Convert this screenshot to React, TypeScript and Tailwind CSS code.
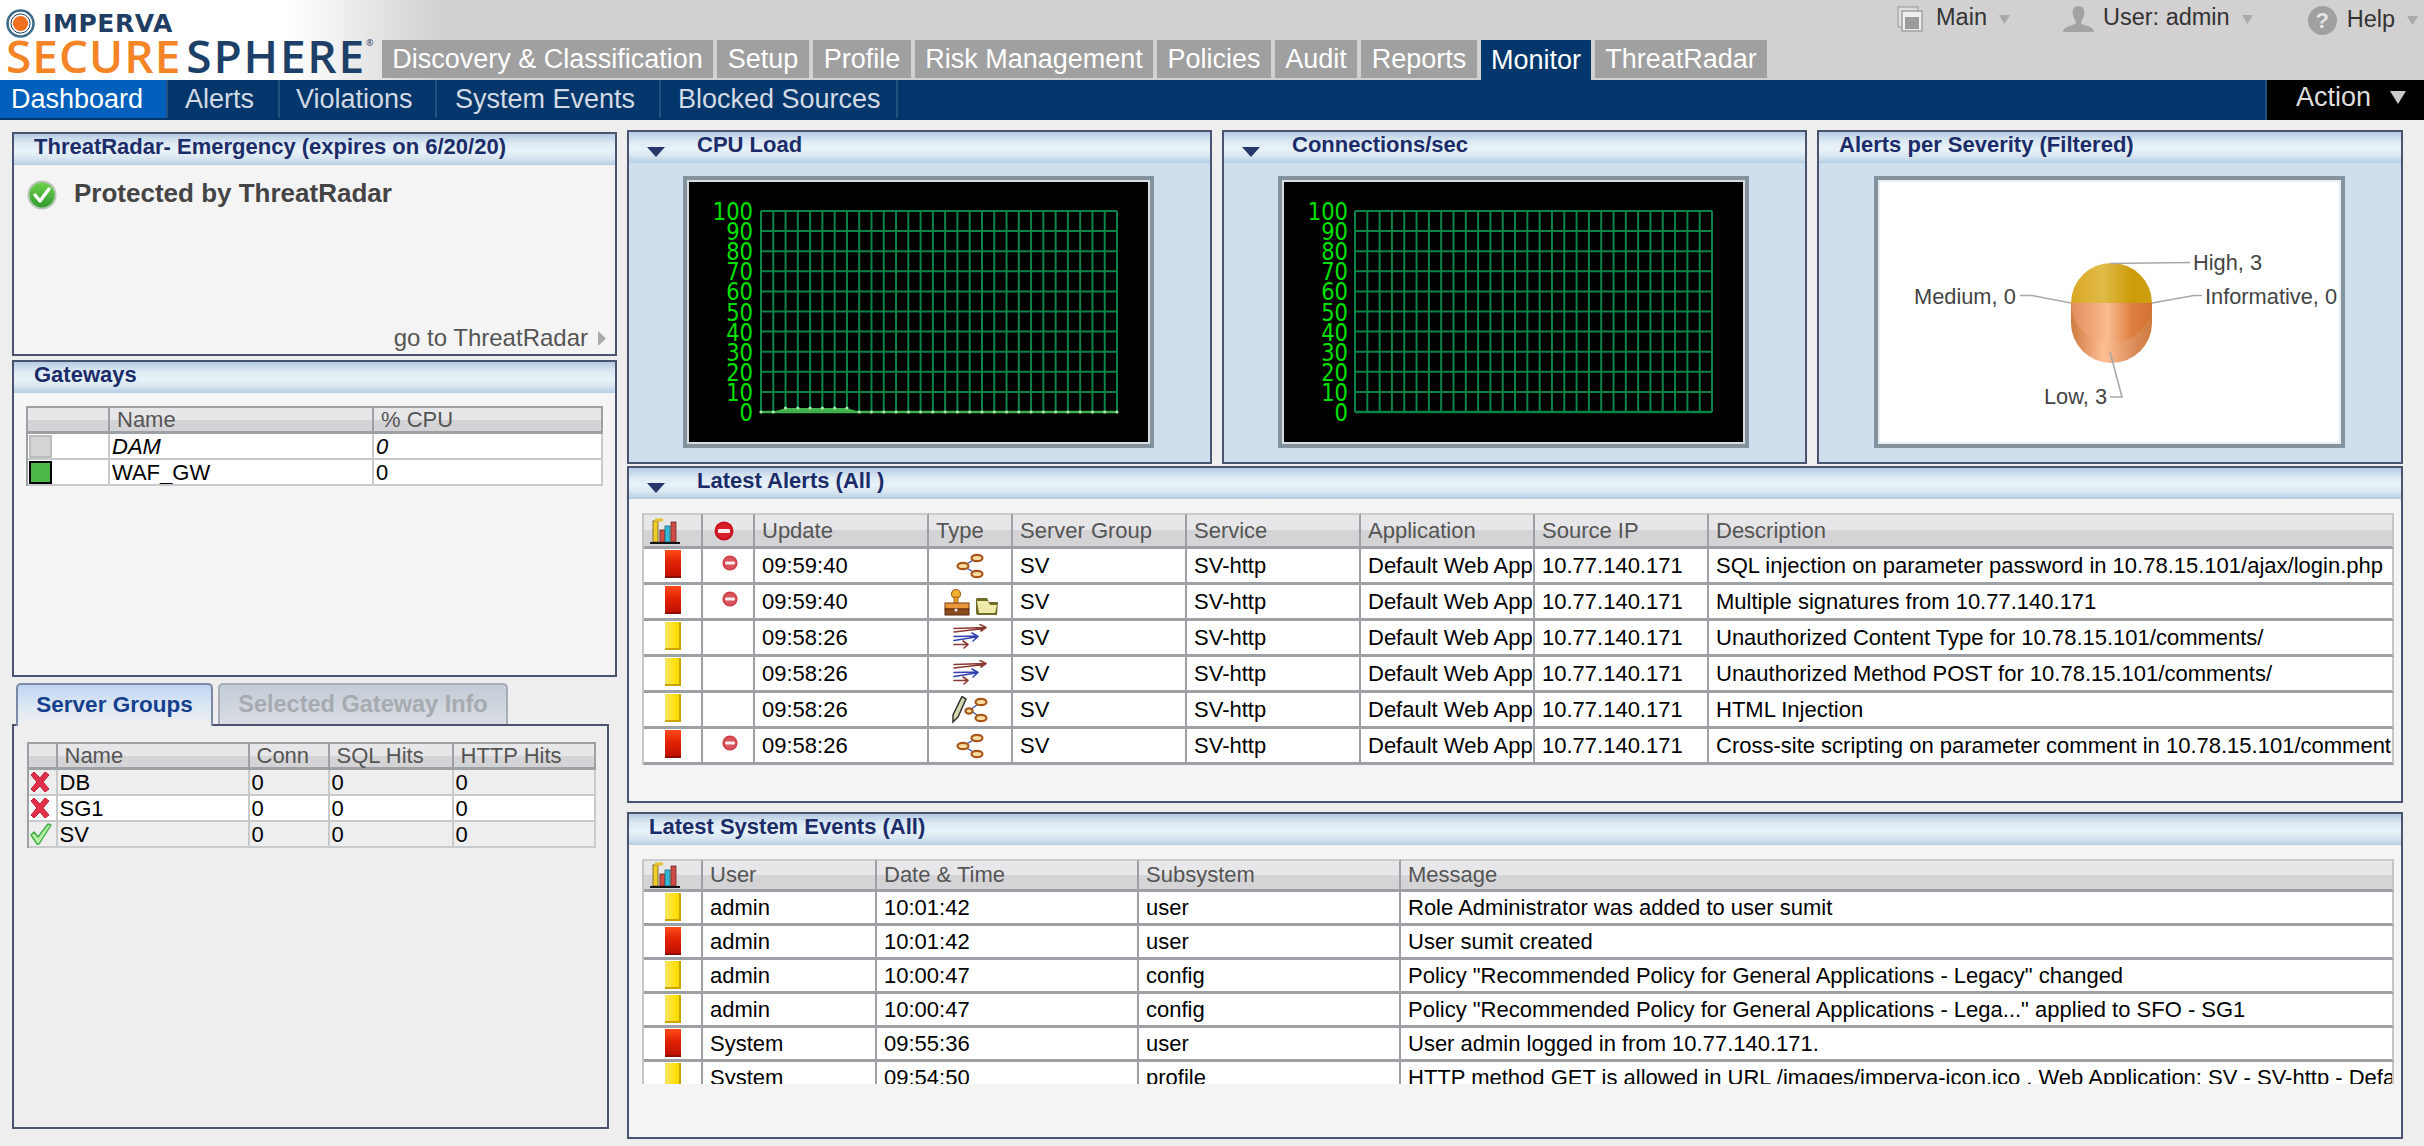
import React from "react";

const HEAD_BG = "bg-[linear-gradient(180deg,#b4cbe2_0%,#dde9f3_30%,#e8f2f8_55%,#d8e6f1_78%,#b5cde3_100%)]";
const TH_BG = "bg-[linear-gradient(180deg,#e7e7e9_0%,#e7e7e9_50%,#d4d4d6_50%,#d4d4d6_100%)]";

function Tri() {
  return (
    <svg width="20" height="12" viewBox="0 0 20 12" className="mt-[14px] shrink-0">
      <path d="M1 1 H19 L10 11 Z" fill="#26386b" />
    </svg>
  );
}

function Panel({ title, tri, tight, className, children, bodyClass }: { title: string; tri?: boolean; tight?: boolean; className: string; children?: React.ReactNode; bodyClass: string }) {
  return (
    <section className={`flex flex-col border-2 border-[#4a5370] ${className}`}>
      <header className={`flex h-[31px] shrink-0 items-start ${tri ? "pl-[17px]" : "pl-[20px]"} ${HEAD_BG}`}>
        {tri && <Tri />}
        <h2 className={`whitespace-nowrap text-[22px] font-bold text-[#1b2c69] ${tight ? "leading-[25px]" : "leading-[26px]"} ${tri ? "ml-[31px]" : ""}`}>{title}</h2>
      </header>
      <div className={`min-h-0 flex-1 ${bodyClass}`}>{children}</div>
    </section>
  );
}

function Stop({ size, big }: { size: number; big?: boolean }) {
  return (
    <svg width={size} height={size} viewBox="0 0 20 20">
      <circle cx="10" cy="10" r="9.5" fill={big ? "#c8101e" : "#cf3d48"} />
      <circle cx="10" cy="10" r="7.5" fill={big ? "#d81f2c" : "#d9535c"} />
      <rect x="4" y="8" width="12" height="4" rx="1" fill="#f6eeee" />
    </svg>
  );
}

function ChartIcon() {
  return (
    <svg width="30" height="26" viewBox="0 0 30 26">
      <rect x="3" y="3" width="5" height="21" fill="#f2cc2a" stroke="#6b5a10" strokeWidth="0.8" />
      <rect x="5" y="0.5" width="8" height="3" fill="#e7c02a" />
      <rect x="10" y="12" width="5" height="12" fill="#d74a40" stroke="#6b2a20" strokeWidth="0.8" />
      <rect x="15" y="8" width="5" height="16" fill="#35b9d6" stroke="#1a6a80" strokeWidth="0.8" />
      <rect x="21" y="4" width="5" height="20" fill="#d04a48" stroke="#6b2a20" strokeWidth="0.8" />
      <rect x="0" y="24" width="30" height="2" fill="#111" />
    </svg>
  );
}

function TreeIcon() {
  return (
    <svg width="28" height="28" viewBox="0 0 28 28">
      <path d="M7 14 L21 6 M7 14 L21 22" stroke="#3a4bb0" strokeWidth="1.2" fill="none" />
      <g fill="#f9dca0" stroke="#a9561a" strokeWidth="2.2">
        <ellipse cx="7" cy="14" rx="5.5" ry="3.2" />
        <ellipse cx="21" cy="6" rx="5.5" ry="3.2" />
        <ellipse cx="21" cy="22" rx="5.5" ry="3.2" />
      </g>
    </svg>
  );
}

function StampFolderIcon() {
  return (
    <svg width="56" height="28" viewBox="0 0 56 28" className="ml-[2px]">
      <circle cx="13" cy="6" r="4.5" fill="#f0b030" stroke="#a8601a" strokeWidth="1.2" />
      <rect x="11" y="9" width="4" height="7" fill="#e8a028" stroke="#a8601a" />
      <rect x="2" y="15" width="24" height="6" fill="#e89a3a" stroke="#7a3a14" />
      <rect x="2" y="21" width="24" height="6" fill="#8a4a1a" stroke="#5a2a10" />
      <circle cx="13" cy="22" r="1.6" fill="#dfe8ff" />
      <path d="M33 11 L33 25 Q33 27 35 27 L54 27 L55 14 L46 14 L44 10 L35 10 Q33 10 33 11 Z" fill="#6e6a2a" />
      <path d="M34 13 L45 13 L47 17 L54 17 L52 25 L36 25 Z" fill="#eeeaa8" />
    </svg>
  );
}

function ArrowsIcon() {
  return (
    <svg width="34" height="26" viewBox="0 0 34 26" fill="none" strokeWidth="1.6" strokeLinecap="round" strokeLinejoin="round">
      <g stroke="#8a3a30">
        <path d="M1 4.5 L32 3.5 M1 8 L31 4.5 M27 0.5 L33 3.5 L28 7" />
        <path d="M1 20.5 L14 20.5 M10 17 L15 20.5 L11 24" />
      </g>
      <g stroke="#3340b0">
        <path d="M1 12.5 L24 12 M1 16.5 L23 13 M19 9 L25 12.5 L20 17" />
      </g>
    </svg>
  );
}

function PencilTreeIcon() {
  return (
    <svg width="36" height="28" viewBox="0 0 36 28">
      <path d="M18 14 L29 6 M18 14 L29 22" stroke="#3a4bb0" strokeWidth="1.2" fill="none" />
      <path d="M10 0.5 L14 3 L6 21 L1 26 L1 19 Z" fill="#d8d8b0" stroke="#333" strokeWidth="1.5" />
      <g fill="#f9dca0" stroke="#a9561a" strokeWidth="2.2">
        <ellipse cx="17" cy="15" rx="3.6" ry="2.6" />
        <ellipse cx="29" cy="6" rx="5.5" ry="3.2" />
        <ellipse cx="29" cy="22" rx="5.5" ry="3.2" />
      </g>
    </svg>
  );
}

function Bar({ level }: { level: "r" | "y" }) {
  return level === "r" ? (
    <div className="mt-px ml-[21px] h-[28px] w-[16px] border-b-2 border-[#8f0c00] bg-[linear-gradient(180deg,#ff4b1a_0%,#e22405_45%,#c01000_100%)]" />
  ) : (
    <div className="mt-px ml-[21px] h-[28px] w-[16px] border-r-2 border-b-2 border-[#c9a400] bg-[linear-gradient(90deg,#f6e46a_0%,#ffe31a_60%,#f7d800_100%)]" />
  );
}

const TH = `border-t-2 border-r-2 border-b-[3px] border-t-[#cbcbcb] border-r-[#9da1a5] border-b-[#9da1a5] px-[7px] text-left text-[22px] leading-[24px] font-normal text-[#555] ${TH_BG}`;
const TD = "overflow-hidden whitespace-nowrap border-r-2 border-b-[3px] border-[#9da1a5] bg-white px-[7px] text-[22px] leading-[24px] text-black";
const ICON_TD = "overflow-hidden border-r-2 border-b-[3px] border-[#9da1a5] bg-white p-0 align-top";

type AlertRow = { lv: "r" | "y"; stop: boolean; time: string; type: "tree" | "stamp" | "arrows" | "pencil"; desc: string };
const alerts: AlertRow[] = [
  { lv: "r", stop: true, time: "09:59:40", type: "tree", desc: "SQL injection on parameter password in 10.78.15.101/ajax/login.php" },
  { lv: "r", stop: true, time: "09:59:40", type: "stamp", desc: "Multiple signatures from 10.77.140.171" },
  { lv: "y", stop: false, time: "09:58:26", type: "arrows", desc: "Unauthorized Content Type for 10.78.15.101/comments/" },
  { lv: "y", stop: false, time: "09:58:26", type: "arrows", desc: "Unauthorized Method POST for 10.78.15.101/comments/" },
  { lv: "y", stop: false, time: "09:58:26", type: "pencil", desc: "HTML Injection" },
  { lv: "r", stop: true, time: "09:58:26", type: "tree", desc: "Cross-site scripting on parameter comment in 10.78.15.101/comments/" },
];

const events: { lv: "r" | "y"; user: string; time: string; sub: string; msg: string }[] = [
  { lv: "y", user: "admin", time: "10:01:42", sub: "user", msg: "Role Administrator was added to user sumit" },
  { lv: "r", user: "admin", time: "10:01:42", sub: "user", msg: "User sumit created" },
  { lv: "y", user: "admin", time: "10:00:47", sub: "config", msg: 'Policy "Recommended Policy for General Applications - Legacy" changed' },
  { lv: "y", user: "admin", time: "10:00:47", sub: "config", msg: 'Policy "Recommended Policy for General Applications - Lega..." applied to SFO - SG1' },
  { lv: "r", user: "System", time: "09:55:36", sub: "user", msg: "User admin logged in from 10.77.140.171." },
  { lv: "y", user: "System", time: "09:54:50", sub: "profile", msg: "HTTP method GET is allowed in URL /images/imperva-icon.ico . Web Application: SV - SV-http - Default Web Application" },
];

function AlertsTable() {
  return (
    <table className="w-[1752px] table-fixed border-separate border-spacing-0 border-l-2 border-[#c4c6c8]">
      <colgroup>
        <col className="w-[59px]" /><col className="w-[52px]" /><col className="w-[174px]" /><col className="w-[84px]" /><col className="w-[174px]" /><col className="w-[174px]" /><col className="w-[174px]" /><col className="w-[174px]" /><col />
      </colgroup>
      <thead>
        <tr className="h-[36px]">
          <th className={`${TH} !p-0`}><div className="ml-[6px]"><ChartIcon /></div></th>
          <th className={`${TH} !p-0`}><div className="flex justify-center pr-[9px]"><Stop size={20} big /></div></th>
          {["Update", "Type", "Server Group", "Service", "Application", "Source IP"].map((h) => <th key={h} className={TH}>{h}</th>)}
          <th className={`${TH} border-r-[#c4c6c8]`}>Description</th>
        </tr>
      </thead>
      <tbody>
        {alerts.map((r, i) => (
          <tr key={i} className="h-[36px]">
            <td className={ICON_TD}><Bar level={r.lv} /></td>
            <td className={ICON_TD}>{r.stop && <div className="flex justify-center pl-[4px] pt-[6px]"><Stop size={16} /></div>}</td>
            <td className={TD}>{r.time}</td>
            <td className={ICON_TD}>
              <div className="flex justify-center pt-[3px]">
                {r.type === "tree" && <TreeIcon />}
                {r.type === "stamp" && <StampFolderIcon />}
                {r.type === "arrows" && <ArrowsIcon />}
                {r.type === "pencil" && <PencilTreeIcon />}
              </div>
            </td>
            <td className={TD}>SV</td>
            <td className={TD}>SV-http</td>
            <td className={TD}>Default Web Application</td>
            <td className={TD}>10.77.140.171</td>
            <td className={`${TD} border-r-[#c4c6c8]`}>{r.desc}</td>
          </tr>
        ))}
      </tbody>
    </table>
  );
}

function EventsTable() {
  return (
    <div className="h-[225px] overflow-hidden">
      <table className="w-[1752px] table-fixed border-separate border-spacing-0 border-l-2 border-[#c4c6c8]">
        <colgroup>
          <col className="w-[59px]" /><col className="w-[174px]" /><col className="w-[262px]" /><col className="w-[262px]" /><col />
        </colgroup>
        <thead>
          <tr className="h-[33px]">
            <th className={`${TH} !p-0`}><div className="ml-[6px]"><ChartIcon /></div></th>
            {["User", "Date & Time", "Subsystem"].map((h) => <th key={h} className={TH}>{h}</th>)}
            <th className={`${TH} border-r-[#c4c6c8]`}>Message</th>
          </tr>
        </thead>
        <tbody>
          {events.map((r, i) => (
            <tr key={i} className="h-[34px]">
              <td className={ICON_TD}><Bar level={r.lv} /></td>
              <td className={TD}>{r.user}</td>
              <td className={TD}>{r.time}</td>
              <td className={TD}>{r.sub}</td>
              <td className={`${TD} border-r-[#c4c6c8]`}>{r.msg}</td>
            </tr>
          ))}
        </tbody>
      </table>
    </div>
  );
}

const STH = `border-t-2 border-r-2 border-b-[3px] border-t-[#9da1a5] border-r-[#9da1a5] border-b-[#9da1a5] px-[7px] pt-[1px] pb-0 text-left text-[22px] leading-[22px] font-normal text-[#555] ${TH_BG}`;
const STD = "overflow-hidden whitespace-nowrap border-r-2 border-b-2 border-[#c9cacc] px-[2px] pt-[1px] pb-0 text-[22px] leading-[22px] text-black";

function GatewaysTable() {
  return (
    <table className="w-[577px] table-fixed border-separate border-spacing-0 border-l-2 border-[#9da1a5]">
      <colgroup><col className="w-[82px]" /><col className="w-[264px]" /><col /></colgroup>
      <thead><tr className="h-[27px]"><th className={STH} /><th className={STH}>Name</th><th className={STH}>% CPU</th></tr></thead>
      <tbody>
        <tr className="h-[26px] bg-white">
          <td className={`${STD} !p-0 align-top`}><div className="ml-[1px] mt-[1px] h-[23px] w-[23px] border-2 border-[#bcbcbc] bg-[#d4d4d4]" /></td>
          <td className={`${STD} italic`}>DAM</td><td className={`${STD} italic`}>0</td>
        </tr>
        <tr className="h-[26px] bg-white">
          <td className={`${STD} !p-0 align-top`}><div className="ml-[1px] mt-[1px] h-[23px] w-[23px] border-2 border-black bg-[#4cb848]" /></td>
          <td className={STD}>WAF_GW</td><td className={STD}>0</td>
        </tr>
      </tbody>
    </table>
  );
}

function RedX() {
  return (
    <svg width="20" height="22" viewBox="0 0 20 22">
      <path d="M4 1 L10 7 L15 1 L19 4 L13 11 L19 18 L15 21 L10 15 L4 21 L1 18 L7 11 L1 4 Z" fill="#e2304a" stroke="#c01a30" strokeWidth="1" />
    </svg>
  );
}

function GreenCheck() {
  return (
    <svg width="22" height="22" viewBox="0 0 22 22">
      <path d="M1 12 L4 9 L8 14 L18 1 L21 2 L9 21 L7 21 Z" fill="#b8f0a8" stroke="#3fae3f" strokeWidth="1.4" strokeLinejoin="round" />
    </svg>
  );
}

function ServerTable() {
  const rows = [
    { n: "DB", ok: false, bg: "bg-[#eeeeee]" },
    { n: "SG1", ok: false, bg: "bg-white" },
    { n: "SV", ok: true, bg: "bg-[#eeeeee]" },
  ];
  return (
    <table className="w-[569px] table-fixed border-separate border-spacing-0 border-l-2 border-[#9da1a5]">
      <colgroup><col className="w-[29px]" /><col className="w-[192px]" /><col className="w-[80px]" /><col className="w-[124px]" /><col /></colgroup>
      <thead>
        <tr className="h-[27px]">
          <th className={STH} /><th className={STH}>Name</th><th className={STH}>Conn</th><th className={STH}>SQL Hits</th><th className={STH}>HTTP Hits</th>
        </tr>
      </thead>
      <tbody>
        {rows.map((r) => (
          <tr key={r.n} className={`h-[26px] ${r.bg}`}>
            <td className={`${STD} !p-0 align-top`}><div className="ml-[1px] mt-[1px]">{r.ok ? <GreenCheck /> : <RedX />}</div></td>
            <td className={STD}>{r.n}</td><td className={STD}>0</td><td className={STD}>0</td><td className={STD}>0</td>
          </tr>
        ))}
      </tbody>
    </table>
  );
}

function LineChart({ gx, data }: { gx: number; data: boolean }) {
  const right = 428;
  const top = 29;
  const step = 20.1;
  const bottom = top + step * 10;
  const vs = Array.from({ length: 30 }, (_, i) => gx + ((right - gx) / 29) * i);
  const hs = Array.from({ length: 11 }, (_, i) => top + step * i);
  const labels = [100, 90, 80, 70, 60, 50, 40, 30, 20, 10, 0];
  const dx = (right - gx) / 29;
  return (
    <svg width="459" height="260" viewBox="0 0 459 260" className="block">
      {vs.map((x) => <line key={x} x1={x} x2={x} y1={top} y2={bottom} stroke="#0a8447" strokeWidth="2" />)}
      {hs.map((y) => <line key={y} x1={gx} x2={right} y1={y} y2={y} stroke="#0a8447" strokeWidth="2" />)}
      {labels.map((l, i) => (
        <text key={l} transform={`translate(64 ${hs[i] + 9}) scale(0.88 1)`} textAnchor="end" fontFamily="'DejaVu Sans', sans-serif" fontSize="24" fill="#00e000">{l}</text>
      ))}
      <path d={`M${gx} ${bottom} L${gx + dx} ${bottom} L${gx + 2 * dx} ${bottom - 4} L${gx + 7 * dx} ${bottom - 4} L${gx + 8 * dx} ${bottom} Z`} fill={data ? "#44b54c" : "none"} />
      <line x1={gx} x2={right} y1={bottom} y2={bottom} stroke={data ? "#3fae4c" : "#0a8447"} strokeWidth="2.4" />
      {data && vs.map((x, i) => {
        const y = i >= 2 && i <= 7 ? bottom - 4 : bottom;
        return <circle key={x} cx={x} cy={y} r="1.6" fill="#a8e8a8" />;
      })}
    </svg>
  );
}

function ChartFrame({ children, white }: { children: React.ReactNode; white?: boolean }) {
  return (
    <div className="border-[4px] border-[#84929e]">
      <div className={`border-2 ${white ? "border-[#e6eef5] bg-white" : "border-[#d7dde2] bg-black"} h-[264px] w-[463px]`}>
        <div className="h-[260px] w-[459px] overflow-hidden">{children}</div>
      </div>
    </div>
  );
}

function PieChart() {
  return (
    <svg width="459" height="260" viewBox="1880 182 459 260" className="block">
      <defs>
        <linearGradient id="gold" x1="0" x2="1" y1="0" y2="0">
          <stop offset="0" stopColor="#d9a722" /><stop offset="0.4" stopColor="#e0bb48" /><stop offset="0.75" stopColor="#cc9c0a" /><stop offset="1" stopColor="#cf9f10" />
        </linearGradient>
        <linearGradient id="lid" x1="0" x2="1" y1="0" y2="0">
          <stop offset="0" stopColor="#e38c5a" /><stop offset="0.45" stopColor="#fabb90" /><stop offset="0.75" stopColor="#df7f42" /><stop offset="1" stopColor="#d47030" />
        </linearGradient>
        <linearGradient id="side" x1="0" x2="1" y1="0" y2="0">
          <stop offset="0" stopColor="#cf7a40" /><stop offset="0.4" stopColor="#febe94" /><stop offset="0.8" stopColor="#d98a54" /><stop offset="1" stopColor="#cd7a3c" />
        </linearGradient>
      </defs>
      <path d="M2071 303 V323 A40.5 40 0 0 0 2152 323 V303 Z" fill="url(#side)" />
      <path d="M2071 303 A40.5 40 0 0 0 2152 303 Z" fill="url(#lid)" />
      <path d="M2071 303 A40.5 40 0 0 1 2152 303 Z" fill="url(#gold)" />
      <g fill="none" stroke="#a8a8a8" strokeWidth="1.6">
        <path d="M2110 263.5 L2190 262.5" />
        <path d="M2020 295.5 L2032 295.5 L2071 303" />
        <path d="M2152 303 L2194 295.5 L2202 295.5" />
        <path d="M2110 352 L2122 397 L2110 397" />
      </g>
      <g fontFamily="'Liberation Sans', sans-serif" fontSize="21.8" fill="#444">
        <text x="2193" y="270">High, 3</text>
        <text x="1914" y="304">Medium, 0</text>
        <text x="2205" y="304">Informative, 0</text>
        <text x="2044" y="404">Low, 3</text>
      </g>
    </svg>
  );
}

function Logo() {
  return (
    <div className="h-[80px] w-[382px] shrink-0 pl-[6px] pt-[9px]">
      <div className="flex h-[29px] items-center">
        <svg width="29" height="29" viewBox="0 0 29 29">
          <circle cx="14.5" cy="14.5" r="13" fill="none" stroke="#3f6d8c" strokeWidth="2.6" />
          <circle cx="14.5" cy="14.5" r="9.6" fill="none" stroke="#1d3f5f" strokeWidth="1" />
          <circle cx="14.5" cy="14.5" r="7.6" fill="#f0701f" />
        </svg>
        <span className="ml-[8px] font-[DejaVu_Sans,sans-serif] text-[25px] font-bold leading-none tracking-[0.6px] text-[#1f3e63]">IMPERVA</span>
      </div>
      <div className="-mt-[3px] flex items-start whitespace-nowrap font-[Open_Sans,sans-serif] text-[46px] font-semibold leading-[40px]">
        <span className="tracking-[1px] text-[#f58426]">SECURE</span>
        <span className="ml-[5px] tracking-[1.8px] text-[#1c4067]">SPHERE</span>
        <span className="mt-[3px] text-[9px] font-normal leading-[10px] text-[#1c4067]">®</span>
      </div>
    </div>
  );
}

function Caret() {
  return (
    <svg width="11" height="9" viewBox="0 0 11 9"><path d="M0 0 H11 L5.5 9 Z" fill="#a9a9a9" /></svg>
  );
}

function TopItem({ icon, label, gapCls, className }: { icon: React.ReactNode; label: string; gapCls: string; className?: string }) {
  return (
    <div className={`flex items-center ${className ?? ""}`}>
      {icon}
      <span className={`${gapCls} -mt-[2px] text-[23.5px] leading-none text-[#333]`}>{label}</span>
      <span className="ml-[12px] flex"><Caret /></span>
    </div>
  );
}

const tabs = [
  { t: "Discovery & Classification", w: "w-[331px]" },
  { t: "Setup", w: "w-[92px]" },
  { t: "Profile", w: "w-[98px]" },
  { t: "Risk Management", w: "w-[238px]" },
  { t: "Policies", w: "w-[114px]" },
  { t: "Audit", w: "w-[82px]" },
  { t: "Reports", w: "w-[116px]" },
  { t: "Monitor", w: "w-[110px]", active: true },
  { t: "ThreatRadar", w: "w-[172px]" },
];

const subnav = [
  { t: "Dashboard", w: "w-[168px] pl-[11px]", active: true },
  { t: "Alerts", w: "w-[112px] pl-[17px]" },
  { t: "Violations", w: "w-[157px] pl-[16px]" },
  { t: "System Events", w: "w-[224px] pl-[18px]" },
  { t: "Blocked Sources", w: "w-[237px] pl-[17px]" },
];

export default function App() {
  return (
    <div className="h-[1146px] w-[2424px] overflow-hidden bg-[#eeeeee] font-[Liberation_Sans,Arial,sans-serif]">
      <div className="flex h-[80px] bg-[linear-gradient(90deg,#ffffff_0px,#ffffff_290px,#d2d0d1_440px,#d2d0d1_100%)]">
        <Logo />
        <div className="flex flex-1 flex-col">
          <div className="flex h-[40px] items-start justify-end pr-[6px] pt-[6px]">
            <TopItem gapCls="ml-[13px]" label="Main" icon={
              <svg width="26" height="26" viewBox="0 0 26 26">
                <rect x="1" y="1" width="20" height="20" fill="#ddd" stroke="#aaa" strokeWidth="1.4" />
                <rect x="5" y="5" width="20" height="20" fill="#eee" stroke="#a4a4a4" strokeWidth="1.6" />
                <rect x="8" y="11" width="14" height="12" fill="#9b9b9b" />
              </svg>
            } />
            <TopItem className="ml-[53px]" gapCls="ml-[9px]" label="User: admin" icon={
              <svg width="31" height="26" viewBox="0 0 31 26">
                <path d="M15.5 0 C21 0 22 5 21 9 C20 13 18 15 18 17 C19 19 31 20 31 26 L0 26 C0 20 12 19 13 17 C13 15 11 13 10 9 C9 5 10 0 15.5 0 Z" fill="#a3a3a3" />
              </svg>
            } />
            <TopItem className="ml-[55px]" gapCls="ml-[10px]" label="Help" icon={
              <div className="flex h-[29px] w-[29px] items-center justify-center rounded-full bg-[#a0a0a0] text-[22px] font-bold leading-none text-[#e4e4e4]">?</div>
            } />
          </div>
          <nav className="flex h-[40px] items-start gap-[4px]">
            {tabs.map((x) => (
              <div key={x.t} className={`flex ${x.w} ${x.active ? "h-[40px] bg-[#03376b]" : "h-[38px] bg-[#a0a0a0]"} items-center justify-center whitespace-nowrap text-[27px] leading-none text-white`}>{x.t}</div>
            ))}
          </nav>
        </div>
      </div>

      <div className="flex h-[40px] items-stretch justify-between bg-[#03376b]">
        <div className="flex">
          {subnav.map((x) => (
            <div key={x.t} className={`flex ${x.w} h-[38px] items-center whitespace-nowrap border-r-2 border-[#24527f] text-[27px] leading-none ${x.active ? "bg-[#0060bb] text-white" : "text-[#d3dae4]"}`}>{x.t}</div>
          ))}
        </div>
        <div className="flex w-[159px] items-center border-l-2 border-[#24527f] bg-black pb-[6px] pl-[29px] text-[27px] leading-none text-[#dedede]">
          Action
          <svg width="16" height="13" viewBox="0 0 16 13" className="ml-[19px]"><path d="M0 0 H16 L8 13 Z" fill="#c9c9c9" /></svg>
        </div>
      </div>

      <main className="flex gap-[10px] pl-[12px] pt-[10px]">
        <div className="flex w-[605px] shrink-0 flex-col pt-[2px]">
          <Panel title="ThreatRadar- Emergency (expires on 6/20/20)" className="h-[224px]" bodyClass="flex flex-col justify-between bg-[#f4f4f4] pb-[1px] pl-[13px] pr-[9px] pt-[15px]">
            <div className="flex items-start">
              <svg width="30" height="30" viewBox="0 0 30 30">
                <defs><linearGradient id="ck" x1="0" y1="0" x2="0" y2="1"><stop offset="0" stopColor="#6fd14a" /><stop offset="1" stopColor="#2f9a2f" /></linearGradient></defs>
                <ellipse cx="15" cy="15" rx="14.5" ry="14.5" fill="#b5c4b5" />
                <circle cx="15" cy="15" r="12.5" fill="url(#ck)" />
                <path d="M8 15 L13 21 L22 9" fill="none" stroke="#fff" strokeWidth="3.4" strokeLinecap="round" strokeLinejoin="round" />
              </svg>
              <span className="ml-[17px] text-[26px] font-bold leading-[26px] text-[#444]">Protected by ThreatRadar</span>
            </div>
            <div className="flex items-center justify-end text-[24px] leading-[30px] text-[#555]">
              go to ThreatRadar
              <svg width="8" height="15" viewBox="0 0 8 15" className="ml-[10px]"><path d="M0 0 L8 7.5 L0 15 Z" fill="#aaa" /></svg>
            </div>
          </Panel>
          <Panel title="Gateways" className="mt-[4px] h-[317px]" bodyClass="bg-[#f5f5f5] pl-[12px] pt-[13px]">
            <GatewaysTable />
          </Panel>
          <div className="mt-[6px] flex pl-[4px]">
            <div className="relative z-10 -mb-[2px] flex h-[43px] w-[197px] items-center justify-center rounded-t-[5px] border-2 border-b-0 border-[#7d8aa6] bg-[linear-gradient(180deg,#bfd5f2_0%,#dfe9f5_55%,#eeeeee_100%)] text-[22.5px] font-bold leading-none text-[#15408c]">Server Groups</div>
            <div className="ml-[5px] flex h-[41px] w-[290px] items-center justify-center rounded-t-[5px] border-2 border-b-0 border-[#a7aeb9] bg-[linear-gradient(180deg,#c3ccd8_0%,#dadde2_100%)] text-[23.5px] font-bold leading-none text-[#a6abb0]">Selected Gateway Info</div>
          </div>
          <div className="h-[405px] w-[597px] border-2 border-[#4a5370] bg-[#eeeeee] pl-[12.5px] pt-[16px]">
            <ServerTable />
          </div>
        </div>

        <div className="flex w-[1776px] shrink-0 flex-col">
          <div className="flex gap-[10px]">
            <Panel title="CPU Load" tri tight className="h-[334px] w-[585px]" bodyClass="flex justify-center bg-[#cfdfee] pr-[2px] pt-[13px]">
              <div><ChartFrame><LineChart gx={72} data /></ChartFrame></div>
            </Panel>
            <Panel title="Connections/sec" tri tight className="h-[334px] w-[585px]" bodyClass="flex justify-center bg-[#cfdfee] pr-[2px] pt-[13px]">
              <div><ChartFrame><LineChart gx={71} data={false} /></ChartFrame></div>
            </Panel>
            <Panel title="Alerts per Severity (Filtered)" tight className="h-[334px] w-[586px]" bodyClass="flex justify-center bg-[#cfdfee] pr-[2px] pt-[13px]">
              <div><ChartFrame white><PieChart /></ChartFrame></div>
            </Panel>
          </div>
          <Panel title="Latest Alerts (All )" tri className="mt-[2px] h-[337px] w-[1776px]" bodyClass="bg-[#f4f4f4] pl-[13px] pt-[14px]">
            <AlertsTable />
          </Panel>
          <Panel title="Latest System Events (All)" className="mt-[9px] h-[327px] w-[1776px]" bodyClass="bg-[#f4f4f4] pl-[13px] pt-[14px]">
            <EventsTable />
          </Panel>
        </div>
      </main>
    </div>
  );
}
